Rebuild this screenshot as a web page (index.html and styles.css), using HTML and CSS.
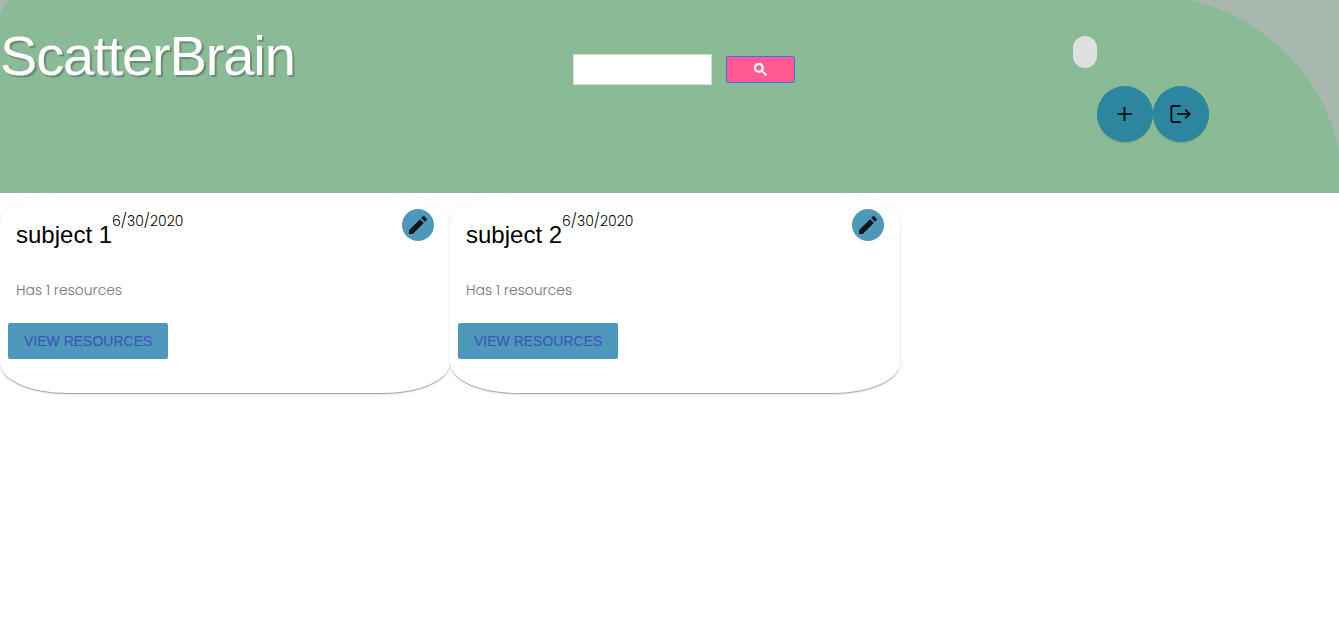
FILE: index.html
```html
<!DOCTYPE html>
<html lang="en">
<head>
<meta charset="utf-8">
<title>ScatterBrain</title>
<link rel="stylesheet" href="styles.css">
</head>
<body>
<header class="banner">
  <svg class="banner-shape" aria-hidden="true" viewBox="0 0 1339 193" preserveAspectRatio="none"><path d="M0 193V17Q2 6 10 0H1191C1267 18 1326 80 1339 152V193Z" fill="#8bba96"/></svg>
  <h1 class="brand">ScatterBrain</h1>
  <form class="search" role="search">
    <input class="search-input" type="text" aria-label="Search">
    <button class="search-button" type="button" aria-label="Search">
      <svg width="13" height="13" viewBox="0 0 13 13"><path fill="#fff" stroke="#fff" stroke-width=".4" d="m4.8495 7.8226c0.82666 0 1.5262-0.29146 2.0985-0.87438 0.57232-0.58292 0.86378-1.2877 0.87438-2.1144 0.010599-0.82666-0.28086-1.5262-0.87438-2.0985-0.59352-0.57232-1.293-0.86378-2.0985-0.87438-0.8055-0.010599-1.5103 0.28086-2.1144 0.87438-0.60414 0.59352-0.8956 1.293-0.87438 2.0985 0.021197 0.8055 0.31266 1.5103 0.87438 2.1144 0.56172 0.60414 1.2665 0.8956 2.1144 0.87438zm4.4695 0.2115 3.681 3.6819-1.259 1.284-3.6817-3.7 0.0019784-0.69479-0.090043-0.098846c-0.87973 0.76087-1.92 1.1413-3.1207 1.1413-1.3553 0-2.5025-0.46363-3.4417-1.3909s-1.4088-2.0686-1.4088-3.4239c0-1.3553 0.4696-2.4966 1.4088-3.4239 0.9392-0.92727 2.0864-1.3969 3.4417-1.4088 1.3553-0.011889 2.4906 0.45771 3.406 1.4088 0.9154 0.95107 1.379 2.0924 1.3909 3.4239 0 1.2126-0.38043 2.2588-1.1413 3.1385l0.098834 0.090049z"/></svg>
    </button>
  </form>
  <div class="account">
    <span class="chip"></span>
    <div class="actions">
      <button class="fab" type="button" aria-label="Add subject">
        <svg width="24" height="24" viewBox="0 0 24 24" fill="none" stroke="#000" stroke-width="1.7"><path d="M11.5 5V19M4.5 12H18.8"/></svg>
      </button>
      <button class="fab" type="button" aria-label="Log out">
        <svg width="24" height="24" viewBox="0 0 24 24" fill="none" stroke="#000" stroke-width="1.7"><path d="M11.7 3.9H4Q2.4 3.9 2.4 5.5V18.5Q2.4 20.1 4 20.1H11.7M8 12H21M16.2 7.6L20.7 12L16.2 16.4"/></svg>
      </button>
    </div>
  </div>
</header>
<main class="subjects">
  <article class="card">
    <div class="card-head">
      <h2 class="subject">subject 1</h2>
      <time class="date" datetime="2020-06-30">6/30/2020</time>
      <button class="edit" type="button" aria-label="Edit subject 1">
        <svg width="24" height="24" viewBox="0 0 24 24"><path fill="#0c161b" d="M3 17.25V21h3.75L17.81 9.94l-3.75-3.75L3 17.25zM20.71 7.04c.39-.39.39-1.02 0-1.41l-2.34-2.34a.996.996 0 0 0-1.41 0l-1.83 1.83 3.75 3.75 1.83-1.83z"/></svg>
      </button>
    </div>
    <p class="count">Has 1 resources</p>
    <a class="view" href="#subject-1">VIEW RESOURCES</a>
  </article>
  <article class="card">
    <div class="card-head">
      <h2 class="subject">subject 2</h2>
      <time class="date" datetime="2020-06-30">6/30/2020</time>
      <button class="edit" type="button" aria-label="Edit subject 2">
        <svg width="24" height="24" viewBox="0 0 24 24"><path fill="#0c161b" d="M3 17.25V21h3.75L17.81 9.94l-3.75-3.75L3 17.25zM20.71 7.04c.39-.39.39-1.02 0-1.41l-2.34-2.34a.996.996 0 0 0-1.41 0l-1.83 1.83 3.75 3.75 1.83-1.83z"/></svg>
      </button>
    </div>
    <p class="count">Has 1 resources</p>
    <a class="view" href="#subject-2">VIEW RESOURCES</a>
  </article>
</main>
</body>
</html>
```

FILE: styles.css
```css
* {
  box-sizing: border-box;
}

body {
  min-height: 100vh;
  margin: 0;
  background: #fff;
  color: #000;
  font-family: "Liberation Sans", Arial, sans-serif;
}

button {
  border: 0;
  padding: 0;
  cursor: pointer;
}

.banner {
  position: relative;
  z-index: 0;
  display: grid;
  grid-template-columns: 573px 1fr 266px;
  align-items: start;
  padding-bottom: 51px;
  background: #a9b8ae;
}

.banner-shape {
  position: absolute;
  inset: 0;
  z-index: -1;
  width: 100%;
  height: 100%;
}

.brand {
  margin: 0;
  padding-top: 24px;
  color: #fff;
  font-size: 56px;
  font-weight: 400;
  line-height: 64px;
  letter-spacing: -0.02em;
  text-shadow: 2px 2px 1px rgba(0, 0, 0, 0.25);
}

.search {
  display: flex;
  align-items: center;
  gap: 14px;
  padding-top: 54px;
}

.search-input {
  width: 139px;
  height: 31px;
  padding: 4px 8px;
  border: 1px solid #d9d9d9;
  background: #fff;
}

.search-button {
  display: flex;
  align-items: center;
  justify-content: center;
  width: 69px;
  height: 27px;
  border: 1px solid #3079ed;
  border-radius: 2px;
  background: #ff5b92;
}

.account {
  display: flex;
  flex-direction: column;
  gap: 18px;
  padding-top: 36px;
}

.chip {
  width: 24px;
  height: 32px;
  border-radius: 16px;
  background: #e0e0e0;
}

.actions {
  display: flex;
  padding-left: 24px;
}

.fab {
  display: flex;
  align-items: center;
  justify-content: center;
  width: 56px;
  height: 56px;
  border-radius: 50%;
  background: #2d86a0;
  box-shadow: 0 1px 1px rgba(0, 0, 0, 0.2);
}

.subjects {
  display: flex;
  flex-wrap: wrap;
  padding-bottom: 16px;
}

.card {
  display: flex;
  flex-direction: column;
  align-items: flex-start;
  width: 450px;
  padding: 16px 8px 34px;
  border-radius: 15%;
  background: #fff;
  box-shadow: 0 2px 1px -1px rgba(0, 0, 0, 0.2), 0 1px 1px rgba(0, 0, 0, 0.14), 0 1px 3px rgba(0, 0, 0, 0.12);
}

.card-head {
  display: flex;
  align-items: flex-start;
  align-self: stretch;
  padding: 0 8px;
}

.subject {
  margin: 0;
  padding-top: 10px;
  font-size: 24px;
  font-weight: 400;
  line-height: 32px;
}

.date {
  padding-top: 2px;
  font-family: Poppins, "Open Sans", sans-serif;
  font-size: 14px;
  font-weight: 300;
  line-height: 20px;
}

.edit {
  display: flex;
  align-items: center;
  justify-content: center;
  width: 32px;
  height: 32px;
  margin-left: auto;
  border-radius: 50%;
  background: #4d98bb;
}

.count {
  margin: 0;
  padding: 29px 8px 23px;
  color: #757575;
  font-family: Poppins, "Open Sans", sans-serif;
  font-size: 14px;
  font-weight: 300;
  line-height: 20px;
}

.view {
  padding: 0 16px;
  border-radius: 2px;
  background: #4d98bb;
  color: #3f51b5;
  font-size: 14px;
  line-height: 36px;
  text-decoration: none;
}
```
